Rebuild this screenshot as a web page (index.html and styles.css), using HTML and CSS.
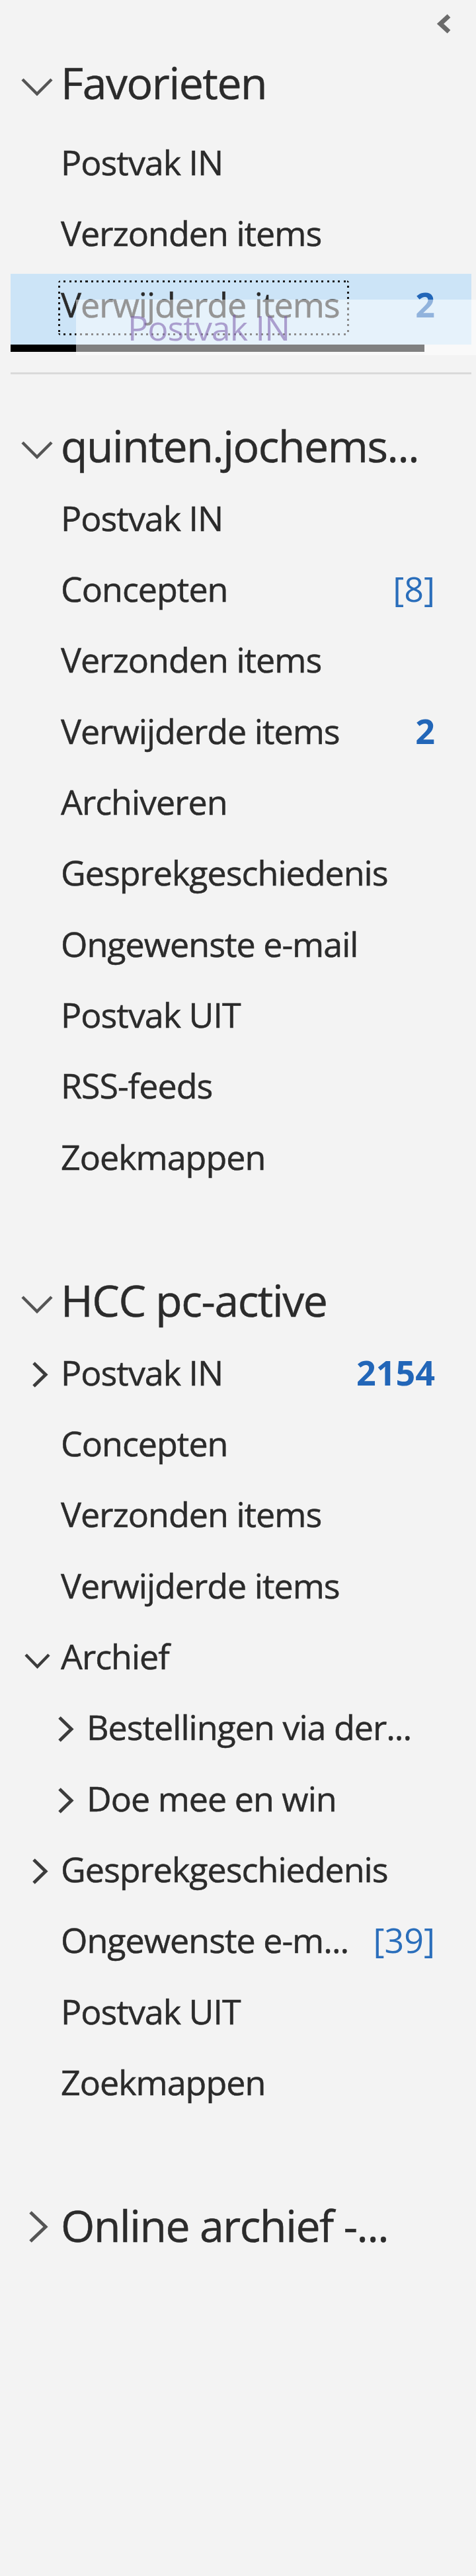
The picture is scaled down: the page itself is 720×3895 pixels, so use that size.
FILE: index.html
```html
<!DOCTYPE html>
<html lang="nl">
<head>
    <meta charset="UTF-8">
    <meta name="viewport" content="width=device-width, initial-scale=1.0">
    <title>Mappen</title>
    <link rel="stylesheet" href="styles.css">
</head>
<body>
    <div class="pane">
        <div class="topbar">
            <button class="collapse" title="Mappenvenster minimaliseren">
                <svg width="23" height="32" viewBox="0 0 23 32"><polyline points="19,4 6,16 19,28"/></svg>
            </button>
        </div>

        <div class="section">
            <div class="head head-fav">
                <span class="twisty"><svg class="chev-down" width="48" height="27" viewBox="0 0 48 27"><polyline points="2,2 24,24 46,2"/></svg></span>
                <span class="head-title">Favorieten</span>
            </div>
            <ul class="folders">
                <li class="row"><span class="twisty"></span><span class="label">Postvak IN</span></li>
                <li class="row"><span class="twisty"></span><span class="label">Verzonden items</span></li>
                <li class="drop">
                    <div class="row selected"><span class="twisty"></span><span class="label focus">Verwijderde items</span><span class="count unread">2</span></div>
                    <div class="drop-line"></div>
                    <div class="drag-ghost"><span>Postvak IN</span></div>
                </li>
            </ul>
            <div class="sep"></div>
        </div>

        <div class="section account">
            <div class="head">
                <span class="twisty"><svg class="chev-down" width="48" height="27" viewBox="0 0 48 27"><polyline points="2,2 24,24 46,2"/></svg></span>
                <span class="head-title">quinten.jochems...</span>
            </div>
            <ul class="folders">
                <li class="row"><span class="twisty"></span><span class="label">Postvak IN</span></li>
                <li class="row"><span class="twisty"></span><span class="label">Concepten</span><span class="count">[8]</span></li>
                <li class="row"><span class="twisty"></span><span class="label">Verzonden items</span></li>
                <li class="row"><span class="twisty"></span><span class="label">Verwijderde items</span><span class="count unread">2</span></li>
                <li class="row"><span class="twisty"></span><span class="label">Archiveren</span></li>
                <li class="row"><span class="twisty"></span><span class="label">Gesprekgeschiedenis</span></li>
                <li class="row"><span class="twisty"></span><span class="label">Ongewenste e-mail</span></li>
                <li class="row"><span class="twisty"></span><span class="label">Postvak UIT</span></li>
                <li class="row"><span class="twisty"></span><span class="label">RSS-feeds</span></li>
                <li class="row"><span class="twisty"></span><span class="label">Zoekmappen</span></li>
            </ul>
        </div>

        <div class="section account">
            <div class="head">
                <span class="twisty"><svg class="chev-down" width="48" height="27" viewBox="0 0 48 27"><polyline points="2,2 24,24 46,2"/></svg></span>
                <span class="head-title">HCC pc-active</span>
            </div>
            <ul class="folders">
                <li class="row"><span class="twisty"><svg class="chev-right-sm" width="25" height="41" viewBox="0 0 25 41"><polyline points="3,3 21,20.5 3,38"/></svg></span><span class="label">Postvak IN</span><span class="count unread">2154</span></li>
                <li class="row"><span class="twisty"></span><span class="label">Concepten</span></li>
                <li class="row"><span class="twisty"></span><span class="label">Verzonden items</span></li>
                <li class="row"><span class="twisty"></span><span class="label">Verwijderde items</span></li>
                <li class="row"><span class="twisty"><svg class="chev-down-sm" width="39" height="25" viewBox="0 0 39 25"><polyline points="2,3 19.5,21 37,3"/></svg></span><span class="label">Archief</span></li>
                <li class="row sub"><span class="twisty"><svg class="chev-right-sm" width="25" height="41" viewBox="0 0 25 41"><polyline points="3,3 21,20.5 3,38"/></svg></span><span class="label">Bestellingen via der...</span></li>
                <li class="row sub"><span class="twisty"><svg class="chev-right-sm" width="25" height="41" viewBox="0 0 25 41"><polyline points="3,3 21,20.5 3,38"/></svg></span><span class="label">Doe mee en win</span></li>
                <li class="row"><span class="twisty"><svg class="chev-right-sm" width="25" height="41" viewBox="0 0 25 41"><polyline points="3,3 21,20.5 3,38"/></svg></span><span class="label">Gesprekgeschiedenis</span></li>
                <li class="row"><span class="twisty"></span><span class="label">Ongewenste e-m...</span><span class="count">[39]</span></li>
                <li class="row"><span class="twisty"></span><span class="label">Postvak UIT</span></li>
                <li class="row"><span class="twisty"></span><span class="label">Zoekmappen</span></li>
            </ul>
        </div>

        <div class="section account">
            <div class="head">
                <span class="twisty"><svg class="chev-right" width="30" height="50" viewBox="0 0 30 50"><polyline points="3,3 26,25 3,47"/></svg></span>
                <span class="head-title">Online archief -...</span>
            </div>
        </div>
    </div>
</body>
</html>
```

FILE: styles.css
```css
body {
    margin: 0;
    background: #f3f3f3;
    font-family: "Open Sans", "Noto Sans", sans-serif;
    color: #2b2b2b;
}
.pane {
    min-height: 3895px;
    box-sizing: border-box;
    padding: 0 7px 0 16px;
}
.topbar {
    height: 84px;
    display: flex;
    justify-content: flex-end;
    align-items: flex-start;
    padding-right: 30px;
}
.collapse {
    margin-top: 20px;
    padding: 0;
    border: none;
    background: none;
    cursor: pointer;
}
.collapse svg {
    display: block;
    fill: none;
    stroke: #6b6b6b;
    stroke-width: 7;
}
.account {
    margin-top: 115px;
}
.section:nth-child(3) {
    margin-top: 67px;
}
.head {
    display: flex;
    align-items: flex-start;
    height: 104px;
    padding-left: 14px;
}
.head-fav {
    margin-bottom: 11px;
}
.head .twisty {
    width: 58px;
    flex: none;
}
.twisty svg {
    display: block;
    fill: none;
    stroke: #3c3c3c;
    stroke-width: 5;
}
.head .twisty svg {
    stroke: #555;
}
.chev-down {
    margin: 34px 0 0 2px;
    stroke-width: 4.5 !important;
}
.chev-right {
    margin: 18px 0 0 13px;
}
.head-title {
    font-size: 66px;
    line-height: 80px;
    letter-spacing: -1.4px;
    padding-left: 4px;
    white-space: nowrap;
    -webkit-text-stroke: 0.5px currentColor;
}
.folders {
    list-style: none;
    margin: 0;
    padding: 0;
}
.row {
    display: flex;
    align-items: flex-start;
    height: 107.3px;
    box-sizing: border-box;
    padding: 10px 55px 0 20px;
}
.row.sub {
    padding-left: 59px;
}
.row .twisty {
    width: 52px;
    flex: none;
}
.chev-right-sm {
    margin: 19px 0 0 12px;
}
.chev-down-sm {
    margin: 31px 0 0 1px;
    stroke-width: 4.5 !important;
}
.label {
    font-size: 52px;
    line-height: 71px;
    letter-spacing: -1px;
    padding: 0 14px 12px 4px;
    white-space: nowrap;
    -webkit-text-stroke: 0.5px currentColor;
}
.count {
    margin-left: auto;
    font-size: 52px;
    line-height: 71px;
    color: #2a6ebb;
}
.count.unread {
    font-weight: 700;
    color: #2266b8;
}
.row.selected {
    background: #cce4f7;
}
.focus {
    background:
        repeating-linear-gradient(90deg, #1a1a1a 0 3px, transparent 3px 8.3px) top left / 100% 3px no-repeat,
        repeating-linear-gradient(90deg, #1a1a1a 0 3px, transparent 3px 8.3px) bottom left / 100% 3px no-repeat,
        repeating-linear-gradient(180deg, #1a1a1a 0 3px, transparent 3px 8.3px) top left / 3px 100% no-repeat,
        repeating-linear-gradient(180deg, #1a1a1a 0 3px, transparent 3px 8.3px) top right / 3px 100% no-repeat;
    border-radius: 4px;
}
.drop {
    position: relative;
}
.drop-line {
    height: 11px;
    width: 626px;
    background: #000;
}
.drag-ghost {
    position: absolute;
    top: 39px;
    left: 99px;
    right: -7px;
    height: 84px;
    background: rgba(255, 255, 255, 0.5);
}
.drag-ghost span {
    display: block;
    padding: 6px 0 0 78px;
    font-size: 52px;
    line-height: 71px;
    letter-spacing: -1px;
    color: rgba(120, 90, 170, 0.55);
    white-space: nowrap;
}
.sep {
    height: 3px;
    margin-top: 31px;
    background: #d9d9d9;
}
```
